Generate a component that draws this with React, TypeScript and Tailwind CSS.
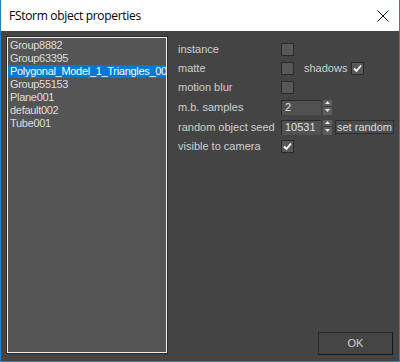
import React from "react";

const items = [
  "Group8882",
  "Group63395",
  "Polygonal_Model_1_Triangles_001",
  "Group55153",
  "Plane001",
  "default002",
  "Tube001",
];

function Check({ checked }: { checked?: boolean }) {
  return (
    <div className="w-[13px] h-[13px] border border-[#2a2a2a] bg-[#585858] flex items-center justify-center shrink-0">
      {checked && (
        <svg width="9" height="9" viewBox="0 0 9 9">
          <path d="M1 4.5 L3.5 7 L8 1.5" stroke="#ffffff" strokeWidth="1.8" fill="none" />
        </svg>
      )}
    </div>
  );
}

function Spin() {
  return (
    <div className="w-[9px] h-[15px] ml-[2px] bg-[#5e5e5e] flex flex-col shrink-0">
      <div className="h-[7px] flex items-center justify-center border-b border-[#3a3a3a]">
        <svg width="5" height="3" viewBox="0 0 5 3"><path d="M0 3 L2.5 0 L5 3Z" fill="#e8e8e8" /></svg>
      </div>
      <div className="h-[8px] flex items-center justify-center">
        <svg width="5" height="3" viewBox="0 0 5 3"><path d="M0 0 L2.5 3 L5 0Z" fill="#e8e8e8" /></svg>
      </div>
    </div>
  );
}

function Num({ v }: { v: string }) {
  return (
    <div className="w-[40px] h-[15px] bg-[#515151] border-t border-l border-[#2a2a2a] flex items-center pl-[3px] text-[#e0e0e0] leading-none shrink-0">
      {v}
    </div>
  );
}

export default function App() {
  return (
    <div
      className="w-[400px] h-[362px] flex flex-col border-x border-b border-[#1883d7] bg-white overflow-hidden"
      style={{ fontFamily: '"Liberation Sans", Arial, sans-serif' }}
    >
      <div className="h-[31px] flex items-center justify-between pl-[8px] pr-[10px] bg-white shrink-0">
        <span
          className="text-[12px] text-black tracking-[-0.3px]"
          style={{ fontFamily: '"Open Sans", "Noto Sans", sans-serif' }}
        >
          FStorm object properties
        </span>
        <svg width="12" height="12" viewBox="0 0 12 12">
          <path d="M0.5 0.5 L11.5 11.5 M11.5 0.5 L0.5 11.5" stroke="#111" strokeWidth="1" />
        </svg>
      </div>
      <div className="flex-1 bg-[#444444] flex pt-[5px] pl-[5px] text-[11px] leading-[13px]">
        <div className="w-[162px] h-[318px] border border-[#2b2b2b] shrink-0">
          <div className="w-full h-full border border-[#f0f0f0] bg-[#555555] pt-[1px] overflow-hidden">
            {items.map((it, i) => (
              <div
                key={it}
                className={
                  "h-[13px] leading-[13px] pl-[2px] whitespace-nowrap tracking-[-0.3px] " +
                  (i === 2 ? "bg-[#0078d7] text-white" : "text-[#dedede]")
                }
              >
                {it}
              </div>
            ))}
          </div>
        </div>
        <div className="flex-1 flex flex-col pl-[10px] pr-[6px] text-[#cfcfcf]">
          <div className="flex flex-col pt-[3px]">
            <div className="h-[20px] flex items-center">
              <span className="w-[103px]">instance</span>
              <Check />
            </div>
            <div className="h-[19px] flex items-center">
              <span className="w-[103px]">matte</span>
              <Check />
              <span className="ml-[10px] w-[47px]">shadows</span>
              <Check checked />
            </div>
            <div className="h-[19px] flex items-center">
              <span className="w-[103px]">motion blur</span>
              <Check />
            </div>
            <div className="h-[20px] flex items-center">
              <span className="w-[103px]">m.b. samples</span>
              <Num v="2" />
              <Spin />
            </div>
            <div className="h-[20px] flex items-center">
              <span className="w-[103px] whitespace-nowrap">random object seed</span>
              <Num v="10531" />
              <Spin />
              <div className="ml-[3px] h-[14px] w-[59px] bg-[#4c4c4c] border border-[#2d2d2d] flex items-center justify-center text-[#dcdcdc] leading-none">
                set random
              </div>
            </div>
            <div className="h-[19px] flex items-center">
              <span className="w-[103px]">visible to camera</span>
              <Check checked />
            </div>
          </div>
          <div className="flex-1" />
          <div className="flex justify-end pr-[1px] pb-[6px]">
            <div className="w-[75px] h-[23px] bg-[#454545] border border-[#2a2a2a] border-b-[#151515] border-r-[#151515] flex items-center justify-center text-[#d0d0d0] text-[11px]">
              OK
            </div>
          </div>
        </div>
      </div>
    </div>
  );
}
